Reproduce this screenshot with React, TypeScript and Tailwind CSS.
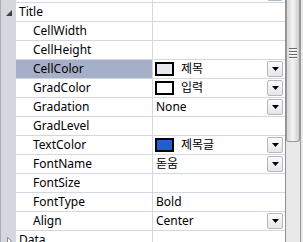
const font = { fontFamily: '"Noto Sans", "Noto Sans CJK KR", sans-serif' };

type Row = {
  name: string;
  value?: string;
  swatch?: string;
  dropdown?: boolean;
  selected?: boolean;
};

const rows: Row[] = [
  { name: "CellWidth" },
  { name: "CellHeight" },
  { name: "CellColor", value: "제목", swatch: "#e6eaf0", dropdown: true, selected: true },
  { name: "GradColor", value: "입력", swatch: "#ffffff", dropdown: true },
  { name: "Gradation", value: "None", dropdown: true },
  { name: "GradLevel" },
  { name: "TextColor", value: "제목글", swatch: "#1f5fd2", dropdown: true },
  { name: "FontName", value: "돋움", dropdown: true },
  { name: "FontSize" },
  { name: "FontType", value: "Bold" },
  { name: "Align", value: "Center", dropdown: true },
];

const DropButton = () => (
  <div className="ml-auto mr-[2px] w-[16px] h-[16px] flex items-center justify-center rounded-[2px] border border-[#b4b8c0] bg-gradient-to-b from-[#fbfbfb] to-[#e6e6e6]">
    <svg width="7" height="4" viewBox="0 0 7 4">
      <path d="M0 0h7L3.5 4z" fill="#000" />
    </svg>
  </div>
);

const Gutter = ({ children }: { children?: React.ReactNode }) => (
  <div className="w-[16px] shrink-0 h-full bg-[#d4d7de] border-l border-[#a9adb6] flex items-center justify-center">
    {children}
  </div>
);

const App = () => {
  return (
    <div className="w-[303px] h-[242px] overflow-hidden flex bg-white text-[12px] text-black" style={font}>
      <div className="w-[285px] flex flex-col -mt-[16px]">
        {/* partial row above */}
        <div className="flex h-[19px] shrink-0">
          <Gutter />
          <div className="w-[137px] border-b border-r border-[#d3d7e0]" />
          <div className="flex-1 flex items-center border-b border-[#d3d7e0]">
            <DropButton />
          </div>
        </div>
        {/* category: Title */}
        <div className="flex h-[19px] shrink-0">
          <Gutter>
            <svg width="6" height="6" viewBox="0 0 6 6" className="ml-[1px]">
              <path d="M6 0v6H0z" fill="#404040" />
            </svg>
          </Gutter>
          <div className="w-[137px] border-b border-r border-[#d3d7e0] pl-[3px] flex items-center leading-none">Title</div>
          <div className="flex-1 border-b border-[#d3d7e0]" />
        </div>
        {rows.map((r) => (
          <div key={r.name} className="flex h-[19px] shrink-0">
            <Gutter />
            <div
              className={`w-[137px] border-b border-r border-[#d3d7e0] pl-[17px] flex items-center leading-none ${
                r.selected ? "bg-[#a6afc8]" : ""
              }`}
            >
              {r.name}
            </div>
            <div className="flex-1 flex items-center border-b border-[#d3d7e0] pl-[2px] leading-none">
              {r.swatch && (
                <span
                  className="w-[19px] h-[14px] border-2 border-black mr-[6px] shrink-0"
                  style={{ backgroundColor: r.swatch }}
                />
              )}
              {r.value && <span className="pl-[1px]">{r.value}</span>}
              {r.dropdown && <DropButton />}
            </div>
          </div>
        ))}
        {/* category: Data */}
        <div className="flex h-[19px] shrink-0">
          <Gutter>
            <svg width="5" height="8" viewBox="0 0 5 8" className="ml-[1px]">
              <path d="M0.5 0.5v7L4.5 4z" fill="#fff" stroke="#8a8a8a" />
            </svg>
          </Gutter>
          <div className="w-[137px] border-b border-r border-[#d3d7e0] pl-[3px] flex items-center leading-none">Data</div>
          <div className="flex-1 border-b border-[#d3d7e0]" />
        </div>
      </div>
      {/* scrollbar */}
      <div className="w-[18px] h-full flex border-l border-[#8e9096]">
        <div className="w-[14px] h-full flex flex-col bg-[#e8e8e8]">
          <div className="h-[142px] shrink-0 rounded-b-[3px] border border-t-0 border-[#9a9a9a] bg-gradient-to-r from-[#d8d8d8] via-[#f4f4f4] to-[#cdcdcd] flex flex-col items-center">
            <div className="mt-[48px] flex flex-col gap-[1px]">
              <div className="w-[8px] h-[2px] border-t border-b-0 border-[#6a6a6a] bg-[#f8f8f8]" />
              <div className="w-[8px] h-[2px] border-t border-[#6a6a6a] bg-[#f8f8f8]" />
              <div className="w-[8px] h-[2px] border-t border-[#6a6a6a] bg-[#f8f8f8]" />
              <div className="w-[8px] h-[2px] border-t border-[#6a6a6a] bg-[#f8f8f8]" />
            </div>
          </div>
        </div>
        <div className="w-[1px] h-full bg-[#9a9a9a]" />
        <div className="flex-1 h-full bg-[#e9e9e9]" />
      </div>
    </div>
  );
};

export default App;
